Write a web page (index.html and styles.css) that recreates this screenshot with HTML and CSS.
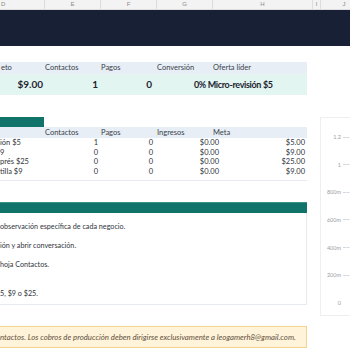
FILE: index.html
```html
<!DOCTYPE html>
<html lang="es">
<head>
    <meta charset="UTF-8">
    <meta name="viewport" content="width=device-width, initial-scale=1.0">
    <title>Panel de ventas</title>
    <link rel="stylesheet" href="styles.css">
</head>
<body>
    <div class="colhead">
        <div class="col col-d">D</div>
        <div class="col col-e">E</div>
        <div class="col col-f">F</div>
        <div class="col col-g">G</div>
        <div class="col col-h">H</div>
        <div class="col col-i">I</div>
        <div class="col col-j">J</div>
    </div>
    <div class="banner"></div>

    <div class="page">
        <div class="kpi">
            <div class="kpi-head">
                <span>eto</span>
                <span>Contactos</span>
                <span>Pagos</span>
                <span>Conversión</span>
                <span>Oferta líder</span>
            </div>
            <div class="kpi-row">
                <span class="num">$9.00</span>
                <span class="num">1</span>
                <span class="num">0</span>
                <span class="offer">0% Micro-revisión $5</span>
            </div>
        </div>

        <div class="main">
            <div class="left">
                <section class="offers">
                    <div class="tab"></div>
                    <div class="t-head">
                        <span></span>
                        <span>Contactos</span>
                        <span>Pagos</span>
                        <span>Ingresos</span>
                        <span>Meta</span>
                    </div>
                    <div class="t-row">
                        <span class="name">ión $5</span><span class="num">1</span><span class="num">0</span><span class="num">$0.00</span><span class="num">$5.00</span>
                    </div>
                    <div class="t-row">
                        <span class="name">9</span><span class="num">0</span><span class="num">0</span><span class="num">$0.00</span><span class="num">$9.00</span>
                    </div>
                    <div class="t-row">
                        <span class="name">prés $25</span><span class="num">0</span><span class="num">0</span><span class="num">$0.00</span><span class="num">$25.00</span>
                    </div>
                    <div class="t-row">
                        <span class="name">tilla $9</span><span class="num">0</span><span class="num">0</span><span class="num">$0.00</span><span class="num">$9.00</span>
                    </div>
                </section>

                <section class="steps">
                    <div class="bar"></div>
                    <ul class="step-list">
                        <li>observación específica de cada negocio.</li>
                        <li>ión y abrir conversación.</li>
                        <li>hoja Contactos.</li>
                        <li class="last">5, $9 o $25.</li>
                    </ul>
                </section>

                <div class="note">ntactos. Los cobros de producción deben dirigirse exclusivamente a leogamerh8@gmail.com.</div>
            </div>

            <aside class="chart">
                <div class="tick"><span class="lbl">1.2</span><span class="dash"></span></div>
                <div class="tick"><span class="lbl">1</span><span class="dash"></span></div>
                <div class="tick"><span class="lbl">800m</span><span class="dash"></span></div>
                <div class="tick"><span class="lbl">600m</span><span class="dash"></span></div>
                <div class="tick"><span class="lbl">400m</span><span class="dash"></span></div>
                <div class="tick"><span class="lbl">200m</span><span class="dash"></span></div>
                <div class="tick"><span class="lbl">0</span></div>
            </aside>
        </div>
    </div>
</body>
</html>
```

FILE: styles.css
```css
html, body {
    margin: 0;
    padding: 0;
    overflow: hidden;
}

body {
    font-family: Lato, "Open Sans", sans-serif;
    color: #2b2f36;
    background: #fff;
    width: 350px;
    height: 350px;
}

/* spreadsheet column letters */
.colhead {
    display: flex;
    height: 10px;
    box-sizing: border-box;
    background: #f3f3f3;
    border-bottom: 1px solid #dedede;
}

.col {
    flex: none;
    box-sizing: border-box;
    border-right: 1px solid #dcdcdc;
    font-family: "Liberation Sans", Arial, sans-serif;
    font-size: 6px;
    line-height: 9px;
    color: #8a8a8a;
    text-align: center;
}

.col-d { width: 45px; text-align: left; padding-left: 1px; }
.col-e { width: 56px; }
.col-f { width: 56px; }
.col-g { width: 56px; }
.col-h { width: 100px; }
.col-i { width: 8px; }
.col-j { width: 46px; border-right: none; }

.banner {
    height: 36px;
    background: #172034;
}

.page {
    padding-top: 16px;
}

/* summary row */
.kpi {
    width: 307px;
}

.kpi-head {
    display: grid;
    grid-template-columns: 44px 56px 56px 56px 95px;
    height: 12px;
    background: #e7eef6;
    font-size: 7.5px;
    line-height: 12px;
    color: #3a3f47;
}

.kpi-head span {
    padding-left: 1px;
}

.kpi-row {
    display: grid;
    grid-template-columns: 44px 55px 54px 1fr;
    height: 21px;
    background: #e3f5f0;
    font-size: 10px;
    font-weight: bold;
    line-height: 21px;
    color: #1d2430;
}

.kpi-row .num {
    text-align: right;
    padding-right: 1px;
}

.kpi-row .offer {
    padding-left: 41px;
    font-size: 9px;
    letter-spacing: -0.35px;
}

.main {
    display: flex;
    align-items: flex-start;
    margin-top: 22px;
}

.left {
    width: 307px;
    flex: none;
}

/* offers table */
.offers {
    padding-bottom: 4px;
    border-bottom: 1px solid #e6e9ee;
}

.tab {
    width: 44px;
    height: 10px;
    background: #11746a;
}

.t-head {
    display: grid;
    grid-template-columns: 44px 56px 56px 56px 95px;
    height: 11px;
    background: #e7eef6;
    font-size: 7.5px;
    line-height: 11px;
    color: #3a3f47;
}

.t-head span {
    padding-left: 1px;
}

.t-row {
    display: grid;
    grid-template-columns: 44px 55px 55px 66px 86px;
    height: 9.5px;
    font-size: 7.5px;
    line-height: 9.5px;
    color: #2f343b;
}

.t-row .num {
    text-align: right;
    padding-right: 1px;
}

/* steps card */
.steps {
    margin-top: 21px;
}

.bar {
    height: 11px;
    box-sizing: border-box;
    background: #11746a;
    border-top: 1px solid #3d9488;
}

.step-list {
    list-style: none;
    margin: 0;
    padding: 9px 0 5px 0;
    border-right: 1px solid #e6e9ee;
    border-bottom: 1px solid #e6e9ee;
    font-size: 7.2px;
    line-height: 10px;
    color: #2f343b;
}

.step-list li {
    margin-bottom: 9px;
}

.step-list li.last {
    margin-top: 19px;
    margin-bottom: 0;
}

.note {
    margin-top: 21px;
    height: 22px;
    box-sizing: border-box;
    background: #fff3d9;
    border: 1px solid #f4d38e;
    border-left: none;
    font-size: 7.8px;
    font-style: italic;
    line-height: 20px;
    color: #5f5140;
    white-space: nowrap;
}

/* chart axis */
.chart {
    flex: none;
    width: 40px;
    height: 199px;
    margin-left: 13px;
    box-sizing: border-box;
    border: 1px solid #eceef2;
    padding-top: 15px;
    display: flex;
    flex-direction: column;
    gap: 19.67px;
}

.tick {
    display: flex;
    align-items: center;
    height: 8px;
}

.lbl {
    width: 20px;
    text-align: right;
    font-size: 5.5px;
    color: #9a9ea6;
}

.dash {
    width: 10px;
    margin-left: 2px;
    border-top: 1px dashed #d6d8dc;
}
```
